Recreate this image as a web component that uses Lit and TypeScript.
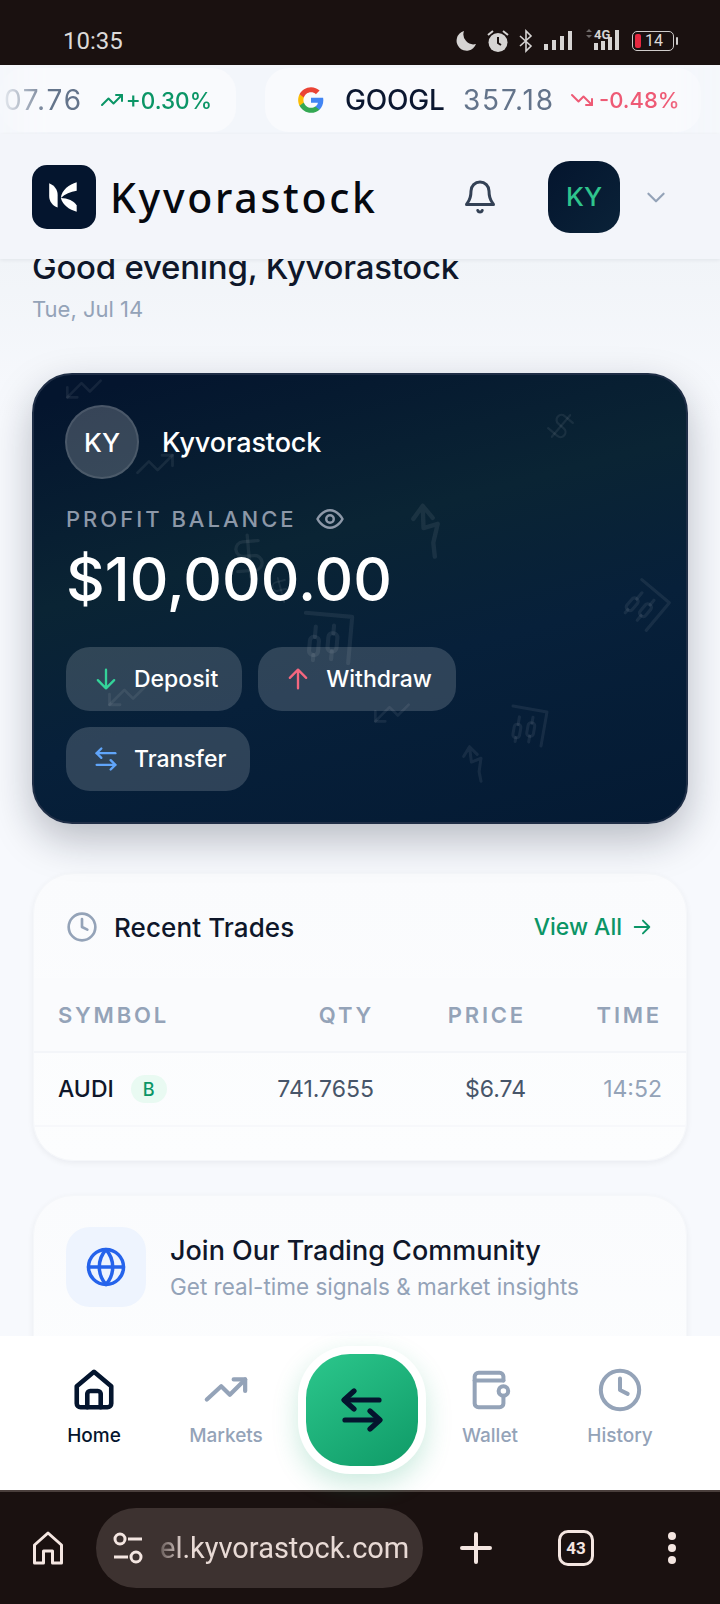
import { LitElement, html, css, svg } from 'lit';
import { customElement } from 'lit/decorators.js';

// faint chart doodles behind the balance card, coordinates are relative to the card
const TREND = svg`<path d="M22 7l-8.5 8.5-5-5L2 17"/><path d="M16 7h6v6"/>`;
const ZIG = svg`<path d="M6 3L3 8M6 3l4 4M6 3l1 8 5-2-1 7 1 5"/>`;
const DOLLAR = svg`<path d="M12 2v20"/><path d="M17 5H9.5a3.5 3.5 0 0 0 0 7h5a3.5 3.5 0 0 1 0 7H6"/>`;
const CANDLE = svg`<path d="M3 3v18h18"/><rect x="8" y="7" width="3.5" height="7" rx="1.5"/><path d="M9.7 4v3M9.7 14v3"/><rect x="15" y="5" width="3.5" height="7" rx="1.5"/><path d="M16.7 3v2M16.7 12v4"/>`;

const DOODLES = [
  { x: 30, y: -6, s: 40, r: 180, d: TREND },
  { x: 100, y: 68, s: 42, r: 0, d: TREND },
  { x: 510, y: 34, s: 34, r: 40, d: DOLLAR },
  { x: 370, y: 124, s: 66, r: 5, d: ZIG },
  { x: 190, y: 156, s: 50, r: -5, d: DOLLAR },
  { x: 232, y: 200, s: 30, r: -15, d: DOLLAR },
  { x: 262, y: 232, s: 62, r: 185, d: CANDLE },
  { x: 586, y: 206, s: 48, r: 220, d: CANDLE },
  { x: 72, y: 300, s: 42, r: 180, d: TREND },
  { x: 338, y: 318, s: 40, r: 180, d: TREND },
  { x: 470, y: 328, s: 46, r: 190, d: CANDLE },
  { x: 424, y: 366, s: 46, r: 0, d: ZIG },
];

const icon = (body: unknown, size: number, sw = 2) => html`
  <svg width=${size} height=${size} viewBox="0 0 24 24" fill="none" stroke="currentColor"
    stroke-width=${sw} stroke-linecap="round" stroke-linejoin="round">${body}</svg>
`;

const CLOCK = svg`<circle cx="12" cy="12" r="10"/><path d="M12 6v6l4 2"/>`;
const SWAP = svg`<path d="M8 3L4 7l4 4"/><path d="M4 7h16"/><path d="M16 21l4-4-4-4"/><path d="M20 17H4"/>`;

@customElement('app-root')
export class AppRoot extends LitElement {
  static styles = css`
    :host {
      display: block;
      width: 720px;
      height: 1604px;
      font-family: Inter, 'Noto Sans', sans-serif;
      color: #0b1730;
    }
    * { box-sizing: border-box; }
    svg { display: block; flex: none; }

    .page {
      display: flex;
      flex-direction: column;
      height: 1604px;
      overflow: hidden;
      background: #f6f8fc;
    }

    /* 상태바 */
    .status {
      height: 65px;
      flex: none;
      background: #1a1110;
      color: #dcdad9;
      display: flex;
      align-items: flex-start;
      justify-content: space-between;
      padding: 27px 40px 0 63px;
      font: 400 24px/29px Roboto, sans-serif;
    }
    .status-icons { display: flex; align-items: center; gap: 9px; height: 26px; margin-top: 1px; margin-right: 6px; }
    .battery {
      width: 42px;
      height: 20px;
      border: 1.5px solid #cfcccb;
      border-radius: 5px;
      display: flex;
      align-items: center;
      gap: 4px;
      padding: 0 2px;
      font-size: 16px;
      line-height: 16px;
      position: relative;
    }
    .battery i { width: 6px; height: 14px; background: #e5283f; border-radius: 2px; }
    .battery::after {
      content: '';
      position: absolute;
      right: -5px;
      top: 5px;
      width: 2px;
      height: 8px;
      background: #cfcccb;
      border-radius: 1px;
    }

    /* 티커 */
    .ticker {
      height: 69px;
      flex: none;
      padding-top: 3px;
      background: #f3f6fb;
      display: flex;
      gap: 29px;
      overflow: hidden;
      -webkit-mask-image: linear-gradient(90deg, rgba(0,0,0,.05) 0, #000 50px, #000 670px, rgba(0,0,0,.1) 720px);
    }
    .tick {
      height: 64px;
      flex: none;
      border-radius: 24px;
      background: #f9fafd;
      display: flex;
      align-items: center;
      font-size: 28px;
      font-weight: 500;
    }
    .tick.first { width: 236px; justify-content: flex-end; padding-right: 24px; }
    .tick.second { width: 436px; padding-left: 26px; }
    .g-box {
      width: 40px;
      height: 40px;
      margin-right: 14px;
      display: flex;
      align-items: center;
      justify-content: center;
    }
    .sym { font-weight: 500; width: 118px; letter-spacing: -0.2px; }
    .px { color: #64748b; width: 107px; letter-spacing: 1.8px; font-weight: 400; }
    .px.cut { width: auto; margin-right: 17px; }
    .up { color: #0b9566; font-size: 22.5px; gap: 2px; }
    .down { color: #ee5a75; font-size: 22px; }
    .chg { display: flex; align-items: center; gap: 5px; }
    .up.chg { gap: 2px; }

    /* 헤더 */
    .header {
      height: 125px;
      flex: none;
      background: #f3f5fa;
      box-shadow: 0 1px 4px rgba(15, 23, 42, .07);
      display: flex;
      align-items: center;
      padding: 0 51px 0 32px;
      position: relative;
      z-index: 2;
    }
    .logo {
      width: 64px;
      height: 64px;
      border-radius: 15px;
      background: #04152e;
      display: flex;
      align-items: center;
      justify-content: center;
      margin-right: 14px;
    }
    .brand {
      flex: 1;
      font: 500 41px/48px 'Noto Sans', sans-serif;
      letter-spacing: 2.7px;
      color: #06090f;
    }
    .bell { color: #334155; margin-right: 50px; }
    .me {
      width: 72px;
      height: 72px;
      border-radius: 22px;
      background: linear-gradient(135deg, #04152e, #0a2238);
      color: #2fc48d;
      font-size: 26px;
      font-weight: 500;
      display: flex;
      align-items: center;
      justify-content: center;
      margin-right: 23px;
    }
    .chev { color: #94a3b8; }

    /* 본문: 스크롤된 상태라 인사말이 헤더 밑으로 잘림 */
    .main {
      flex: 1;
      min-height: 0;
      overflow: hidden;
      padding: 0 32px;
      background: linear-gradient(180deg, #f1f4f8 0, #f7f9fd 160px);
    }
    .hello {
      margin: -12px 0 0;
      font-size: 33px;
      line-height: 40px;
      font-weight: 500;
      letter-spacing: -0.25px;
      color: #0f172a;
    }
    .date { margin-top: 8px; font-size: 22px; line-height: 28px; color: #94a3b8; }

    .hero {
      position: relative;
      margin-top: 50px;
      height: 451px;
      border: 2px solid #1f2e46;
      border-radius: 40px;
      background: linear-gradient(165deg, #04152e 5%, #0a2434 38%, #07203a 62%, #041a33 100%);
      box-shadow: 0 16px 40px rgba(15, 23, 42, .27);
      padding: 30px 32px;
      color: #fff;
      overflow: hidden;
    }
    .doodle { position: absolute; color: rgba(255, 255, 255, .07); }
    .hero > :not(.doodle) { position: relative; }
    .who { display: flex; align-items: center; gap: 23px; margin-left: -1px; }
    .who-av {
      width: 74px;
      height: 74px;
      border-radius: 50%;
      background: rgba(255, 255, 255, .2);
      border: 2px solid rgba(255, 255, 255, .1);
      display: flex;
      align-items: center;
      justify-content: center;
      font-size: 26px;
      font-weight: 500;
    }
    .who-name { font-size: 27px; font-weight: 500; letter-spacing: -0.1px; }
    .bal-label {
      margin-top: 24px;
      display: flex;
      align-items: center;
      gap: 18px;
      font-size: 22px;
      line-height: 32px;
      font-weight: 500;
      letter-spacing: 3px;
      color: #8d98a8;
    }
    .bal {
      margin-top: 8px;
      font-size: 60px;
      line-height: 72px;
      font-weight: 500;
    }
    .actions { margin-top: 32px; display: flex; flex-wrap: wrap; gap: 16px; width: 420px; }
    .btn {
      height: 64px;
      border-radius: 24px;
      background: rgba(255, 255, 255, .16);
      display: flex;
      align-items: center;
      gap: 14px;
      padding: 0 24px 0 26px;
      font-size: 23px;
      font-weight: 500;
    }
    .in { color: #34d399; }
    .out { color: #f4677f; }
    .move { color: #60a5fa; }

    /* 카드 */
    .card {
      background: linear-gradient(180deg, #fafbfd, #fcfdfe);
      border: 1px solid #f5f7fa;
      border-radius: 40px;
      box-shadow: 0 2px 6px rgba(15, 23, 42, .06);
    }
    .trades { margin: 49px 1px 0; height: 288px; overflow: hidden; }
    .trades-head {
      height: 104px;
      display: flex;
      align-items: center;
      padding: 2px 33px 0 32px;
    }
    .trades-head h2 { margin: 0 0 0 16px; flex: 1; font-size: 26px; font-weight: 500; color: #0f172a; letter-spacing: .1px; }
    .clock { color: #94a3b8; }
    .all { display: flex; align-items: center; gap: 9px; font-size: 23px; font-weight: 500; color: #0b9566; }
    .row {
      display: grid;
      grid-template-columns: 161px 155px 152px 136px;
      align-items: center;
      padding: 0 24px;
    }
    .row > :not(:first-child) { text-align: right; }
    .row.head {
      height: 75px;
      border-bottom: 2px solid #f3f5f9;
      background: #fafbfd;
      font-size: 22px;
      font-weight: 600;
      letter-spacing: 2.8px;
      color: #94a3b8;
    }
    .row.body { height: 74px; border-bottom: 2px solid #f7f8fb; font-size: 23px; }
    .symb { display: flex; align-items: center; gap: 17px; font-weight: 500; color: #0f172a; }
    .badge {
      width: 36px;
      height: 28px;
      border-radius: 14px;
      background: #e9faf2;
      color: #0b9566;
      font-size: 18px;
      font-weight: 500;
      display: flex;
      align-items: center;
      justify-content: center;
    }
    .qty, .price { color: #475569; }
    .time { color: #94a3b8; }

    .join {
      margin: 34px 1px 0;
      height: 200px;
      display: flex;
      gap: 24px;
      padding: 31px 32px;
    }
    .globe {
      width: 80px;
      height: 80px;
      border-radius: 24px;
      background: #eef4fe;
      color: #2563eb;
      display: flex;
      align-items: center;
      justify-content: center;
    }
    .join h3 { margin: 7px 0 0; font-size: 27px; line-height: 34px; font-weight: 500; color: #0f172a; }
    .join p { margin: 4px 0 0; font-size: 22.5px; line-height: 30px; color: #94a3b8; }

    /* 하단 내비 */
    .nav {
      height: 154px;
      flex: none;
      background: #fff;
      display: grid;
      grid-template-columns: 132px 132px 140px 116px 144px;
      padding: 31px 28px 0;
      position: relative;
    }
    .nav-item {
      display: flex;
      flex-direction: column;
      align-items: center;
      gap: 11px;
      font-size: 19px;
      line-height: 24px;
      font-weight: 500;
      color: #94a3b8;
    }
    .nav-item.on { color: #04152e; }
    .fab-wrap { position: relative; }
    .fab {
      position: absolute;
      left: 6px;
      top: -21px;
      width: 128px;
      height: 128px;
      border-radius: 52px;
      background: #fff;
      box-shadow: 0 10px 26px rgba(22, 163, 110, .22);
      display: flex;
      align-items: center;
      justify-content: center;
    }
    .fab span {
      width: 112px;
      height: 112px;
      border-radius: 44px;
      background: linear-gradient(145deg, #2cc78c, #0f9a67);
      color: #04152e;
      display: flex;
      align-items: center;
      justify-content: center;
    }

    /* 브라우저 하단바 */
    .browser {
      height: 114px;
      flex: none;
      background: #1a1110;
      border-top: 2px solid #4a3f3c;
      display: flex;
      align-items: center;
      padding: 0 0 0 30px;
      color: #f4e6e1;
    }
    .url {
      width: 327px;
      height: 80px;
      margin-left: 30px;
      border-radius: 40px;
      background: #3d3230;
      display: flex;
      align-items: center;
      gap: 16px;
      padding-left: 16px;
      overflow: hidden;
    }
    .url-text {
      width: 250px;
      font: 400 29px/40px Roboto, sans-serif;
      white-space: nowrap;
      color: #e8dad5;
      -webkit-mask-image: linear-gradient(90deg, rgba(0,0,0,.25) 0, #000 24px);
    }
    .plus { margin-left: 37px; }
    .tabs {
      margin-left: 66px;
      width: 36px;
      height: 36px;
      border: 3.5px solid #f4e6e1;
      border-radius: 10px;
      display: flex;
      align-items: center;
      justify-content: center;
      font: 700 17px/18px Roboto, sans-serif;
    }
    .dots { margin-left: 74px; display: flex; flex-direction: column; gap: 4px; }
    .dots i { width: 8px; height: 8px; border-radius: 50%; background: #f4e6e1; }
  `;

  private statusIcons() {
    return html`
      <div class="status-icons">
        <svg width="22" height="22" viewBox="0 0 22 22" fill="#d6d4d3"><path d="M9 1a10 10 0 1 0 12 13A10 10 0 0 1 9 1z"/></svg>
        <svg width="24" height="24" viewBox="0 0 24 24"><circle cx="12" cy="13.5" r="9.5" fill="#d6d4d3"/><path d="M12 8v6l3 2" fill="none" stroke="#1a1110" stroke-width="2"/><path d="M2 6l5-4M22 6l-5-4" stroke="#d6d4d3" stroke-width="2"/></svg>
        <svg width="14" height="24" viewBox="0 0 14 24" fill="none" stroke="#d6d4d3" stroke-width="1.6"><path d="M1 7l11 10-5 5V2l5 5L1 17"/></svg>
        <svg width="30" height="22" viewBox="0 0 30 22" fill="#d6d4d3" style="margin-left:2px"><rect y="14" width="4" height="6"/><rect x="8" y="10" width="4" height="10"/><rect x="16" y="6" width="4" height="14"/><rect x="24" y="1" width="4" height="19"/></svg>
        <svg width="40" height="26" viewBox="0 0 40 26" fill="#d6d4d3"><path d="M3 4l3-3 3 3zM3 7l3 3 3-3z" fill="#6d6867"/><text x="11" y="11" font-family="Roboto" font-size="13" font-weight="700">4G</text><rect x="11" y="15" width="4" height="7"/><rect x="18" y="13" width="4" height="9"/><rect x="25" y="9" width="4" height="13"/><rect x="32" y="2" width="4" height="20"/></svg>
        <div class="battery"><i></i>14</div>
      </div>
    `;
  }

  private googleIcon() {
    return html`<svg width="28" height="28" viewBox="0 0 24 24">
      <path fill="#4285F4" d="M22.56 12.25c0-.78-.07-1.53-.2-2.25H12v4.26h5.92c-.26 1.37-1.04 2.53-2.21 3.31v2.77h3.57c2.08-1.92 3.28-4.74 3.28-8.09z"/>
      <path fill="#34A853" d="M12 23c2.97 0 5.46-.98 7.28-2.66l-3.57-2.77c-.98.66-2.23 1.06-3.71 1.06-2.86 0-5.29-1.93-6.16-4.53H2.18v2.84C3.99 20.53 7.7 23 12 23z"/>
      <path fill="#FBBC05" d="M5.84 14.09c-.22-.66-.35-1.36-.35-2.09s.13-1.43.35-2.09V7.07H2.18C1.43 8.55 1 10.22 1 12s.43 3.45 1.18 4.93l3.66-2.84z"/>
      <path fill="#EA4335" d="M12 5.38c1.62 0 3.06.56 4.21 1.64l3.15-3.15C17.45 2.09 14.97 1 12 1 7.7 1 3.99 3.47 2.18 7.07l3.66 2.84c.87-2.6 3.3-4.53 6.16-4.53z"/>
    </svg>`;
  }

  render() {
    return html`
      <div class="page">
        <div class="status">
          <span>10:35</span>
          ${this.statusIcons()}
        </div>

        <div class="ticker">
          <div class="tick first">
            <span class="px cut">107.76</span>
            <span class="chg up">${icon(TREND, 24)}+0.30%</span>
          </div>
          <div class="tick second">
            <div class="g-box">${this.googleIcon()}</div>
            <span class="sym">GOOGL</span>
            <span class="px">357.18</span>
            <span class="chg down">${icon(svg`<path d="M22 17l-8.5-8.5-5 5L2 7"/><path d="M16 17h6v-6"/>`, 24)}-0.48%</span>
          </div>
        </div>

        <div class="header">
          <div class="logo">
            <svg width="36" height="36" viewBox="0 0 34 34" fill="#fff">
              <path d="M3 4c5 2 8 6 8 11v12c-5-2-8-6-8-11z"/>
              <path d="M29 3v8c-6 1-11 3-15 7 1-8 8-13 15-15z"/>
              <path d="M14 18c6 0 13 3 15 7v6c-7-2-13-6-15-13z"/>
            </svg>
          </div>
          <div class="brand">Kyvorastock</div>
          <div class="bell">${icon(svg`<path d="M6 8a6 6 0 0 1 12 0c0 7 3 8 3 9H3c0-1 3-2 3-9"/><path d="M10.5 21a1.6 1.6 0 0 0 3 0"/>`, 36)}</div>
          <div class="me">KY</div>
          <div class="chev">${icon(svg`<path d="M5 9l7 7 7-7"/>`, 26)}</div>
        </div>

        <div class="main">
          <h1 class="hello">Good evening, Kyvorastock</h1>
          <div class="date">Tue, Jul 14</div>

          <section class="hero">
            ${DOODLES.map(
              (d) => html`<svg class="doodle" style="left:${d.x}px;top:${d.y}px;transform:rotate(${d.r}deg)"
                width=${d.s} height=${d.s} viewBox="0 0 24 24" fill="none" stroke="currentColor" stroke-width="1.6"
                stroke-linecap="round" stroke-linejoin="round">${d.d}</svg>`
            )}
            <div class="who">
              <div class="who-av">KY</div>
              <div class="who-name">Kyvorastock</div>
            </div>
            <div class="bal-label">
              PROFIT BALANCE
              ${icon(svg`<path d="M2 12s3.6-7 10-7 10 7 10 7-3.6 7-10 7-10-7-10-7z"/><circle cx="12" cy="12" r="3"/>`, 30)}
            </div>
            <div class="bal">$10,000.00</div>
            <div class="actions">
              <div class="btn"><span class="in">${icon(svg`<path d="M12 4v16M5 13l7 7 7-7"/>`, 28)}</span>Deposit</div>
              <div class="btn"><span class="out">${icon(svg`<path d="M12 20V4M5 11l7-7 7 7"/>`, 28)}</span>Withdraw</div>
              <div class="btn"><span class="move">${icon(SWAP, 28)}</span>Transfer</div>
            </div>
          </section>

          <section class="card trades">
            <div class="trades-head">
              <span class="clock">${icon(CLOCK, 32)}</span>
              <h2>Recent Trades</h2>
              <span class="all">View All ${icon(svg`<path d="M4 12h16M13 5l7 7-7 7"/>`, 22)}</span>
            </div>
            <div class="row head"><span>SYMBOL</span><span>QTY</span><span>PRICE</span><span>TIME</span></div>
            <div class="row body">
              <span class="symb">AUDI <span class="badge">B</span></span>
              <span class="qty">741.7655</span>
              <span class="price">$6.74</span>
              <span class="time">14:52</span>
            </div>
          </section>

          <section class="card join">
            <div class="globe">${icon(svg`<circle cx="12" cy="12" r="10"/><path d="M2 12h20"/><path d="M12 2a15 15 0 0 1 0 20 15 15 0 0 1 0-20z"/>`, 42)}</div>
            <div>
              <h3>Join Our Trading Community</h3>
              <p>Get real-time signals &amp; market insights</p>
            </div>
          </section>
        </div>

        <nav class="nav">
          <div class="nav-item on">
            ${icon(svg`<path d="M3 10L12 2.500l9 7.500V19a2 2 0 0 1-2 2H5a2 2 0 0 1-2-2z"/><path d="M8.500 21v-7a1.500 1.500 0 0 1 1.500-1.500h4a1.500 1.500 0 0 1 1.500 1.500v7"/>`, 46, 2.400)}
            <span>Home</span>
          </div>
          <div class="nav-item">
            ${icon(svg`<path d="M22 6.500l-8 8-4.500-4.500L2 17"/><path d="M16 6.500h6v6"/>`, 46, 2.200)}
            <span>Markets</span>
          </div>
          <div class="fab-wrap">
            <div class="fab"><span>${icon(svg`<path d="M8 2.500L3 7l5 4.500"/><path d="M3.500 7h17"/><path d="M16 12.500l5 4.500-5 4.500"/><path d="M20.500 17h-17"/>`, 48, 2.600)}</span></div>
          </div>
          <div class="nav-item">
            ${icon(svg`<path d="M19 7V5a2 2 0 0 0-2-2H6a2 2 0 0 0-2 2v14a2 2 0 0 0 2 2h11a2 2 0 0 0 2-2v-4"/><path d="M4 7h15"/><rect x="16.500" y="10" width="5" height="5" rx="2.500"/>`, 46, 2.100)}
            <span>Wallet</span>
          </div>
          <div class="nav-item">
            ${icon(CLOCK, 46, 2.100)}
            <span>History</span>
          </div>
        </nav>

        <div class="browser">
          ${icon(svg`<path d="M3 10l9-8 9 8v12h-6v-8H9v8H3z"/>`, 36)}
          <div class="url">
            <svg width="32" height="32" viewBox="0 0 32 32" fill="none" stroke="#f4e6e1" stroke-width="3"><circle cx="8" cy="7" r="5"/><path d="M16 7h14M2 25h14"/><circle cx="24" cy="25" r="5"/></svg>
            <div class="url-text">el.kyvorastock.com</div>
          </div>
          <svg class="plus" width="32" height="32" viewBox="0 0 32 32" stroke="#f4e6e1" stroke-width="4" stroke-linecap="round"><path d="M16 2v28M2 16h28"/></svg>
          <div class="tabs">43</div>
          <div class="dots"><i></i><i></i><i></i></div>
        </div>
      </div>
    `;
  }
}
